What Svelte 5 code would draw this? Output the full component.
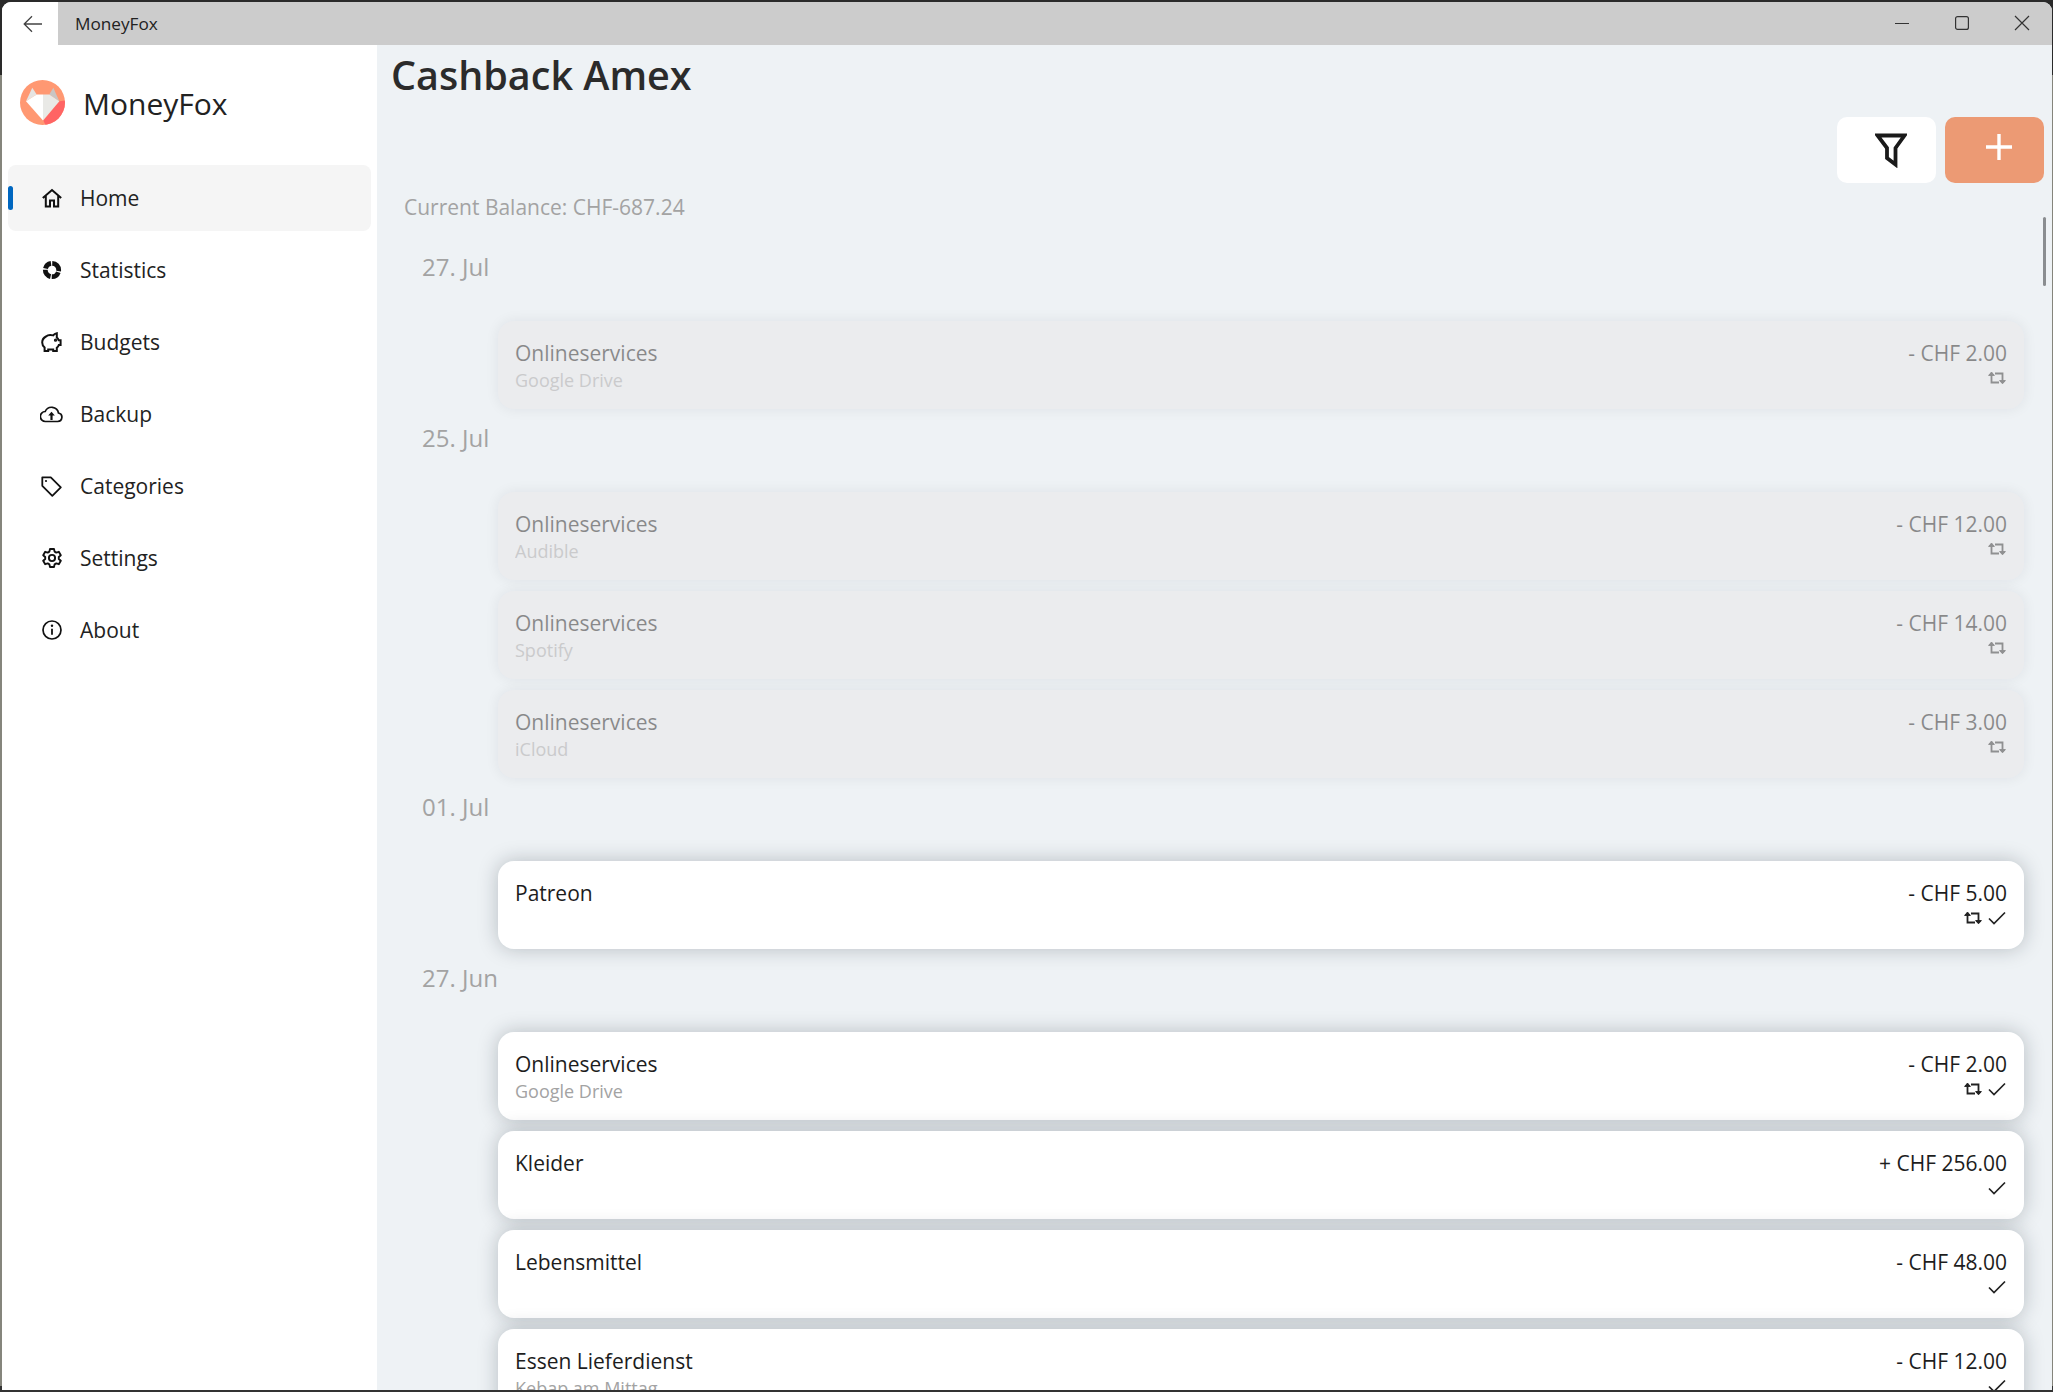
<script>
  const nav = ['Home', 'Statistics', 'Budgets', 'Backup', 'Categories', 'Settings', 'About'];
  const groups = [
    { date: '27. Jul', items: [{ t: 'Onlineservices', s: 'Google Drive', a: '- CHF 2.00', r: true, dim: true }] },
    { date: '25. Jul', items: [
      { t: 'Onlineservices', s: 'Audible', a: '- CHF 12.00', r: true, dim: true },
      { t: 'Onlineservices', s: 'Spotify', a: '- CHF 14.00', r: true, dim: true },
      { t: 'Onlineservices', s: 'iCloud', a: '- CHF 3.00', r: true, dim: true }
    ] },
    { date: '01. Jul', items: [{ t: 'Patreon', s: '', a: '- CHF 5.00', r: true, c: true }] },
    { date: '27. Jun', items: [
      { t: 'Onlineservices', s: 'Google Drive', a: '- CHF 2.00', r: true, c: true },
      { t: 'Kleider', s: '', a: '+ CHF 256.00', c: true },
      { t: 'Lebensmittel', s: '', a: '- CHF 48.00', c: true },
      { t: 'Essen Lieferdienst', s: 'Kebap am Mittag', a: '- CHF 12.00', c: true }
    ] }
  ];
</script>

<div class="window">
  <header class="titlebar">
    <div class="back">
      <svg width="20" height="18" viewBox="0 0 20 18" fill="none" stroke="#444" stroke-width="1.3"><path d="M19 9H1.500M9 1.200 1.200 9 9 16.800"/></svg>
    </div>
    <span class="apptitle">MoneyFox</span>
    <div class="controls">
      <svg width="16" height="16" viewBox="0 0 16 16" fill="none" stroke="#333" stroke-width="1.2"><path d="M1 8.500h14"/></svg>
      <svg width="16" height="16" viewBox="0 0 16 16" fill="none" stroke="#333" stroke-width="1.2"><rect x="1.600" y="1.600" width="12.800" height="12.800" rx="2"/></svg>
      <svg width="16" height="16" viewBox="0 0 16 16" fill="none" stroke="#333" stroke-width="1.2"><path d="M1 1l14 14M15 1 1 15"/></svg>
    </div>
  </header>

  <div class="body">
    <aside class="sidebar">
      <div class="brand">
        <svg width="45" height="45" viewBox="0 0 45 45">
          <defs><clipPath id="lc"><circle cx="22.5" cy="22.5" r="22.5"/></clipPath></defs>
          <g clip-path="url(#lc)">
            <rect width="45" height="45" fill="#ff9872"/>
            <path d="M23.300 40.500 39.300 21.200 50 20V50H28Z" fill="#ff6464"/>
            <path d="M12.300 7.800 6 21.200 16.700 14.500Z" fill="#e6e4e2"/>
            <path d="M33.300 7.800 39.300 21.200 29.300 14.500Z" fill="#c9c5c3"/>
            <path d="M16.700 14.500H23V40.600L6 21.200Z" fill="#fff"/>
            <path d="M23 14.500H29.300L39.300 21.200 23 40.600Z" fill="#e9e9e6"/>
          </g>
        </svg>
        <span class="brandname">MoneyFox</span>
      </div>
      <nav>
        {#each nav as item, i}
          <div class="navitem" class:active={i === 0}>
            {#if i === 0}<span class="indicator"></span>{/if}
            <span class="navicon">
              {#if item === 'Home'}
                <svg width="20" height="20" viewBox="0 0 20 20" fill="none" stroke="#111" stroke-width="2"><path d="M.8 10 10 2l9.200 8M3.800 8v10.500h4.200v-6h4v6h4.200V8"/></svg>
              {:else if item === 'Statistics'}
                <svg width="20" height="20" viewBox="0 0 20 20" fill="none" stroke="#111" stroke-width="4.800"><g transform="rotate(-88 10 10)"><circle cx="10" cy="10" r="6.700" pathLength="100" stroke-dasharray="27 3 20 3 22 3 19 3"/></g></svg>
              {:else if item === 'Budgets'}
                <svg width="21" height="20" viewBox="0 0 21 20" fill="none" stroke="#111" stroke-width="2"><path d="M5 4.500C2.500 5.800 1.200 8 1.200 10.500c0 2 1 3.800 2.400 5V19h3.600v-1.600h5V19h3.600v-3.200c1-.8 1.700-1.700 2-2.800h1.800V8.200h-2c-.4-1-1-1.900-1.800-2.600V1.300c-1.600.3-2.800 1-3.600 2.100-2.600-.7-5.700-.3-7.200 1.100Z"/><circle cx="14.500" cy="8.200" r=".6" fill="#111"/></svg>
              {:else if item === 'Backup'}
                <svg width="23" height="18" viewBox="0 0 23 18" fill="none" stroke="#111" stroke-width="1.700"><path d="M5.500 16.500H17.500a4.300 4.300 0 0 0 1-8.500A7 7 0 0 0 5.200 6.500 5 5 0 0 0 5.500 16.500Z"/><path d="M11.500 15V9.500" stroke-width="2.200"/><path d="M8.200 10.500 11.500 6.800l3.300 3.700Z" fill="#111" stroke="none"/></svg>
              {:else if item === 'Categories'}
                <svg width="21" height="21" viewBox="0 0 21 21" fill="none" stroke="#111" stroke-width="1.800"><path d="M1.300 1.300H9.800L19.800 11.300 11.300 19.800 1.300 9.800Z" stroke-linejoin="round"/><circle cx="5" cy="5" r="1.100" fill="#111" stroke="none"/></svg>
              {:else if item === 'Settings'}
                <svg width="20" height="20" viewBox="0 0 20 20" fill="none" stroke="#111" stroke-width="1.900"><path d="M8 1h4l.6 2.600 1.700 1 2.500-.8 2 3.400-2 1.800v2l2 1.800-2 3.400-2.500-.8-1.700 1-.6 2.600H8l-.6-2.600-1.700-1-2.500.8-2-3.400 2-1.800v-2l-2-1.800 2-3.400 2.500.8 1.700-1Z" stroke-linejoin="round"/><circle cx="10" cy="10" r="3.100"/></svg>
              {:else}
                <svg width="20" height="20" viewBox="0 0 20 20" fill="none" stroke="#111" stroke-width="1.700"><circle cx="10" cy="10" r="9"/><path d="M10 8.800v6" stroke-width="1.800"/><circle cx="10" cy="5.700" r="1.200" fill="#111" stroke="none"/></svg>
              {/if}
            </span>
            <span class="navlabel">{item}</span>
          </div>
        {/each}
      </nav>
    </aside>

    <main class="content">
      <h1>Cashback Amex</h1>
      <div class="actions">
        <button class="btn filter" aria-label="Filter">
          <svg width="32" height="36" viewBox="0 0 32 36" fill="none" stroke="#1a1a1a" stroke-width="3.800" stroke-linejoin="miter"><path d="M2.500 3.500H29.500L20.500 16V32.500L12 26V16Z"/></svg>
        </button>
        <button class="btn add" aria-label="Add">
          <svg width="28" height="28" viewBox="0 0 28 28" stroke="#fff" stroke-width="3.400"><path d="M14 1V27M1 14H27"/></svg>
        </button>
      </div>
      <div class="balance">Current Balance: CHF-687.24</div>
      <div class="list">
        {#each groups as g}
          <section>
            <div class="date">{g.date}</div>
            {#each g.items as p}
              <div class="card" class:dim={p.dim}>
                <div class="left">
                  <div class="title">{p.t}</div>
                  <div class="sub">{p.s}</div>
                </div>
                <div class="right">
                  <div class="amount">{p.a}</div>
                  <div class="flags">
                    {#if p.r}
                      <svg width="18" height="14" viewBox="0 0 18 14" fill="none" stroke="#222" stroke-width="1.800"><path d="M3.500 1.500V11.500H11"/><path d="M.6 4.400 3.500 1.200 6.400 4.400Z" fill="#222" stroke-width="1"/><path d="M14.500 12V2.500H7"/><path d="M11.600 9.600 14.500 12.800 17.400 9.600Z" fill="#222" stroke-width="1"/></svg>
                    {/if}
                    {#if p.c}
                      <svg width="18" height="14" viewBox="0 0 18 14" fill="none" stroke="#222" stroke-width="1.700"><path d="M1 7.500 6 12.500 17 1.500"/></svg>
                    {/if}
                  </div>
                </div>
              </div>
            {/each}
          </section>
        {/each}
      </div>
      <span class="scrollbar"></span>
    </main>
  </div>
</div>

<style>
  :global(body) {
    margin: 0;
    height: 1392px;
    overflow: hidden;
    background: linear-gradient(#2a2a2a 0 75px, #85857c 75px 1386px, #333 1386px);
  }
  .window {
    margin: 2px 1px 0 2px;
    height: 1388px;
    display: flex;
    flex-direction: column;
    overflow: hidden;
    border-radius: 9px 9px 0 0;
    background: #eef2f5;
    font-family: "Open Sans", sans-serif;
    color: #1d1d1d;
  }
  .titlebar {
    flex: 0 0 43px;
    display: flex;
    align-items: center;
    background: #cccccc;
  }
  .back {
    width: 56px;
    height: 100%;
    background: #fff;
    display: flex;
    align-items: center;
    justify-content: center;
    padding-left: 6px;
    box-sizing: border-box;
  }
  .apptitle {
    margin-left: 17px;
    font-size: 17.2px;
    color: #222;
  }
  .controls {
    margin-left: auto;
    display: flex;
    gap: 44px;
    padding-right: 22px;
    margin-top: -1px;
  }
  .body {
    flex: 1;
    display: flex;
    min-height: 0;
  }
  .sidebar {
    width: 375px;
    flex: none;
    background: #fff;
    box-sizing: border-box;
    padding: 0 6px;
  }
  .brand {
    display: flex;
    align-items: center;
    gap: 18px;
    padding: 35px 0 0 12px;
    height: 45px;
  }
  .brandname {
    font-size: 30px;
    color: #222;
    line-height: 45px;
    padding-top: 2px;
  }
  nav {
    margin-top: 40px;
    display: flex;
    flex-direction: column;
    gap: 6px;
  }
  .navitem {
    position: relative;
    height: 66px;
    border-radius: 8px;
    display: flex;
    align-items: center;
    padding-left: 28.5px;
  }
  .navitem.active {
    background: #f5f5f5;
  }
  .indicator {
    position: absolute;
    left: 0;
    top: 21px;
    width: 5px;
    height: 24px;
    border-radius: 3px;
    background: #0067c0;
  }
  .navicon {
    width: 30px;
    display: flex;
    justify-content: center;
    align-items: center;
  }
  .navlabel {
    margin-left: 13.5px;
    font-size: 21px;
    color: #222;
  }
  .content {
    position: relative;
    flex: 1;
    min-width: 0;
    overflow: hidden;
    padding-left: 15px;
  }
  h1 {
    margin: 0 0 0 -1px;
    padding-top: 2px;
    font-size: 39.5px;
    line-height: 56px;
    font-weight: 600;
    color: #2b2b2b;
  }
  .actions {
    display: flex;
    justify-content: flex-end;
    gap: 9px;
    padding: 14px 8px 0 0;
  }
  .btn {
    width: 99px;
    height: 66px;
    border: 0;
    border-radius: 10px;
    padding: 0;
    display: flex;
    align-items: center;
    justify-content: center;
  }
  .filter {
    background: #fff;
    padding-left: 8px;
  }
  .add {
    background: #ec9a74;
    padding: 0 0 6px 8px;
  }
  .balance {
    margin: 9px 0 0 12px;
    font-size: 21px;
    line-height: 30px;
    color: #a3a3a3;
  }
  .list {
    padding: 30px 28px 0 30px;
  }
  section {
    padding-bottom: 3px;
  }
  .date {
    height: 30px;
    padding-bottom: 39px;
    font-size: 24px;
    line-height: 30px;
    color: #a3a3a3;
  }
  .card {
    margin: 0 0 11px 76px;
    height: 88px;
    box-sizing: border-box;
    padding: 18px 17px 0 17px;
    border-radius: 16px;
    background: #fff;
    box-shadow: 0 0 20px rgba(20, 30, 45, 0.25);
    display: flex;
    justify-content: space-between;
  }
  .card.dim {
    background: #ebecee;
    box-shadow: 0 0 14px rgba(20, 30, 45, 0.07);
  }
  .card.dim .title, .card.dim .amount { opacity: 0.48; }
  .card.dim .sub, .card.dim .flags { opacity: 0.45; }
  .title, .amount {
    font-size: 21px;
    line-height: 29px;
    color: #1d1d1d;
  }
  .sub {
    font-size: 18px;
    line-height: 25px;
    color: #a3a3a3;
  }
  .right {
    text-align: right;
  }
  .flags {
    display: flex;
    justify-content: flex-end;
    align-items: center;
    gap: 6px;
    height: 18px;
    margin-top: 1px;
    padding-right: 1px;
  }
  .scrollbar {
    position: absolute;
    right: 6px;
    top: 172px;
    width: 3px;
    height: 69px;
    border-radius: 2px;
    background: #8a8d90;
  }
</style>
